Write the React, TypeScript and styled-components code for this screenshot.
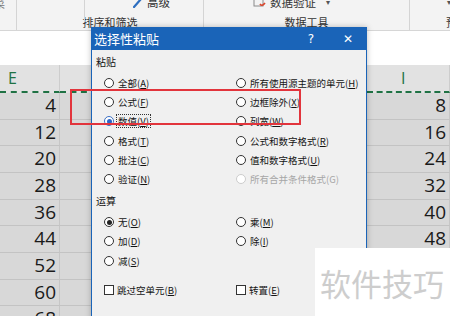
import React from 'react';
import styled, {createGlobalStyle} from 'styled-components';

const GlobalStyle = createGlobalStyle`
  html, body {
    margin: 0;
    padding: 0;
  }
  body {
    width: 450px;
    height: 316px;
    overflow: hidden;
    background: #fff;
    font-family: "Noto Sans CJK SC", "Noto Sans", sans-serif;
  }
`

type Opt = {label: string, key: string, checked?: 'blue' | 'dark', focus?: boolean, disabled?: boolean}

const pasteOptions: Opt[] = [
    {label: '全部', key: 'A'}, {label: '所有使用源主题的单元', key: 'H'},
    {label: '公式', key: 'F'}, {label: '边框除外', key: 'X'},
    {label: '数值', key: 'V', checked: 'blue', focus: true}, {label: '列宽', key: 'W'},
    {label: '格式', key: 'T'}, {label: '公式和数字格式', key: 'R'},
    {label: '批注', key: 'C'}, {label: '值和数字格式', key: 'U'},
    {label: '验证', key: 'N'}, {label: '所有合并条件格式', key: 'G', disabled: true},
]

const operationOptions: Opt[] = [
    {label: '无', key: 'O', checked: 'dark'}, {label: '乘', key: 'M'},
    {label: '加', key: 'D'}, {label: '除', key: 'I'},
    {label: '减', key: 'S'},
]

// visible rows: how many values show before the watermark / dialog covers them
const columns = [
    {name: 'E', width: 60, start: 4, rows: 9},
    {name: 'F', width: 100},
    {name: 'G', width: 100},
    {name: 'H', width: 107},
    {name: 'I', width: 83, start: 8, rows: 6},
]

const rowCount = 9

export default function App() {
    return (
        <Screen>
            <GlobalStyle/>
            <Ribbon>
                <Group $w={17}>
                    <TopRow><Faded>菜</Faded></TopRow>
                </Group>
                <Group $w={187}>
                    <TopRow>
                        <InnerSep $left={67}/>
                        <ToolItem $left={116}>
                            <svg width="11" height="10" viewBox="0 0 11 10">
                                <path d="M1 9 L8 1" stroke="#2e6fc0" strokeWidth="2.2" strokeLinecap="round"/>
                                <path d="M8 1 L10 -1" stroke="#555" strokeWidth="2"/>
                            </svg>
                            <span>高级</span>
                        </ToolItem>
                    </TopRow>
                    <GroupLabel>排序和筛选</GroupLabel>
                </Group>
                <Group $w={206}>
                    <TopRow>
                        <ToolItem $left={49}>
                            <svg width="14" height="10" viewBox="0 0 14 10">
                                <rect x="1" y="1" width="9" height="7" fill="none" stroke="#8a8a8a"/>
                                <path d="M7 6 q2 3 5 -1" stroke="#d9452b" strokeWidth="1.6" fill="none"/>
                            </svg>
                            <span>数据验证</span>
                            <Caret>▾</Caret>
                        </ToolItem>
                    </TopRow>
                    <GroupLabel>数据工具</GroupLabel>
                </Group>
                <Group $w={40} $last>
                    <TopRow><ToolItem $left={30}><Caret>▾</Caret></ToolItem></TopRow>
                    <GroupLabel $left={36}>预测</GroupLabel>
                </Group>
            </Ribbon>
            <FormulaBand/>
            <Sheet>
                {columns.map(c => (
                    <HeaderCell key={c.name} $w={c.width}>{c.name}</HeaderCell>
                ))}
                {Array.from({length: rowCount}).map((_, r) =>
                    columns.map(c => (
                        <Cell key={c.name + r}>
                            {c.start !== undefined && r < (c.rows ?? 0) ? c.start + r * 8 : ''}
                        </Cell>
                    ))
                )}
            </Sheet>

            <Dialog>
                <TitleBar>
                    <Title>选择性粘贴</Title>
                    <TitleButton $w={36}>?</TitleButton>
                    <TitleButton $w={38}>✕</TitleButton>
                </TitleBar>
                <Body>
                    <SectionLabel>粘贴</SectionLabel>
                    <OptionsGrid>
                        {pasteOptions.map(o => <Option key={o.key} opt={o}/>)}
                    </OptionsGrid>
                    <SectionLabel $gap={4}>运算</SectionLabel>
                    <OptionsGrid $gap={4}>
                        {operationOptions.map(o => <Option key={o.key} opt={o}/>)}
                    </OptionsGrid>
                    <OptionsGrid $gap={10}>
                        <OptionRow><Box/><span>跳过空单元(<u>B</u>)</span></OptionRow>
                        <OptionRow><Box/><span>转置(<u>E</u>)</span></OptionRow>
                    </OptionsGrid>
                </Body>
            </Dialog>

            <Highlight/>
            <Watermark>软件技巧</Watermark>
        </Screen>
    );
}

const Option = ({opt}: {opt: Opt}) => (
    <OptionRow $disabled={opt.disabled}>
        <Radio $checked={opt.checked} $disabled={opt.disabled}/>
        <OptionText $focus={opt.focus}>
            {opt.label}({opt.disabled ? opt.key : <u>{opt.key}</u>})
        </OptionText>
    </OptionRow>
)

const Screen = styled.div`
  position: relative;
  width: 450px;
  height: 316px;
  overflow: hidden;
  display: flex;
  flex-direction: column;
`

const Ribbon = styled.div`
  height: 30px;
  flex: none;
  display: flex;
  background: #f3f3f3;
  border-bottom: 1px solid #d6d6d6;
  color: #333;
  font-size: 11px;
`

const Group = styled.div<{$w: number, $last?: boolean}>`
  width: ${p => p.$w}px;
  flex: none;
  box-sizing: border-box;
  border-right: ${p => p.$last ? 'none' : '1px solid #d4d4d4'};
  display: flex;
  flex-direction: column;
  overflow: hidden;
`

const TopRow = styled.div`
  position: relative;
  height: 16px;
  margin-top: -5px;
  display: flex;
  align-items: flex-start;
`

const InnerSep = styled.div<{$left: number}>`
  position: absolute;
  left: ${p => p.$left}px;
  top: 0;
  width: 1px;
  height: 27px;
  background: #d4d4d4;
`

const ToolItem = styled.div<{$left: number}>`
  display: flex;
  align-items: center;
  gap: 3px;
  margin-left: ${p => p.$left}px;
  font-size: 11.5px;
  line-height: 14px;
  white-space: nowrap;

  svg {
    margin-top: 2px;
  }
`

const Caret = styled.span`
  margin-left: 7px;
  font-size: 8px;
  color: #555;
`

const Faded = styled.span`
  margin-left: -6px;
  color: #777;
`

const GroupLabel = styled.div<{$left?: number}>`
  margin-top: auto;
  padding-bottom: 1px;
  line-height: 14px;
  white-space: nowrap;
  text-align: ${p => p.$left !== undefined ? 'left' : 'center'};
  padding-left: ${p => p.$left ?? 0}px;
`

const FormulaBand = styled.div`
  height: 34px;
  flex: none;
  background: #fff;
`

const Sheet = styled.div`
  flex: none;
  display: grid;
  grid-template-columns: ${columns.map(c => c.width + 'px').join(' ')};
  grid-template-rows: 28px;
  grid-auto-rows: 26.67px;
  font-family: "Open Sans", "Noto Sans", sans-serif;
`

const HeaderCell = styled.div<{$w: number}>`
  box-sizing: border-box;
  background: #e2e2e2;
  border-right: 1px solid #cdcdcd;
  border-bottom: 2px dashed #1f7244;
  color: #1f7244;
  font-size: 16px;
  line-height: 26px;
  padding-left: ${p => p.$w === 60 ? 8 : 34}px;
`

const Cell = styled.div`
  box-sizing: border-box;
  background: #d8d8d8;
  border-right: 1px solid #c6c6c6;
  border-bottom: 1px solid #c3c3c3;
  color: #1a1a1a;
  font-size: 19px;
  line-height: 25px;
  text-align: right;
  padding-right: 3px;
`

const Dialog = styled.div`
  position: absolute;
  left: 91px;
  top: 27px;
  width: 276px;
  height: 300px;
  box-sizing: border-box;
  background: #f0f0f0;
  border: 1px solid #1a64b8;
  border-top: none;
  box-shadow: 0 0 6px rgba(0, 0, 0, 0.25);
  display: flex;
  flex-direction: column;
`

const TitleBar = styled.div`
  height: 23px;
  flex: none;
  margin: 0 -1px;
  background: #1a64b8;
  color: #fff;
  display: flex;
  align-items: center;
  padding-left: 3px;
`

const Title = styled.div`
  flex: 1;
  font-size: 13px;
`

const TitleButton = styled.div<{$w: number}>`
  width: ${p => p.$w}px;
  text-align: center;
  font-family: "DejaVu Sans", sans-serif;
  font-size: 12px;
`

const Body = styled.div`
  padding: 4px 0 0 4px;
  color: #141414;
  font-size: 9.5px;
`

const SectionLabel = styled.div<{$gap?: number}>`
  height: 16px;
  line-height: 16px;
  font-size: 10px;
  margin-top: ${p => p.$gap ?? 0}px;
`

const OptionsGrid = styled.div<{$gap?: number}>`
  display: grid;
  grid-template-columns: 132px 1fr;
  grid-auto-rows: 19.2px;
  padding-left: 8px;
  margin-top: ${p => p.$gap ?? 3.5}px;
`

const OptionRow = styled.div<{$disabled?: boolean}>`
  display: flex;
  align-items: center;
  gap: 3px;
  white-space: nowrap;
  color: ${p => p.$disabled ? '#a6a6a6' : 'inherit'};
`

const OptionText = styled.span<{$focus?: boolean}>`
  padding: 0 1px;
  line-height: 12px;
  outline: ${p => p.$focus ? '1px dotted #333' : 'none'};
`

const Radio = styled.span<{$checked?: 'blue' | 'dark', $disabled?: boolean}>`
  position: relative;
  width: 10px;
  height: 10px;
  flex: none;
  box-sizing: border-box;
  border-radius: 50%;
  background: #fff;
  border: 1px solid ${p => p.$disabled ? '#cccccc' : p.$checked === 'blue' ? '#3a6fc4' : '#333'};

  &::after {
    content: "";
    display: ${p => p.$checked ? 'block' : 'none'};
    position: absolute;
    left: 1.5px;
    top: 1.5px;
    width: 5px;
    height: 5px;
    border-radius: 50%;
    background: ${p => p.$checked === 'blue' ? '#2a66c8' : '#222'};
  }
`

const Box = styled.span`
  width: 10px;
  height: 10px;
  flex: none;
  box-sizing: border-box;
  background: #fff;
  border: 1px solid #333;
`

const Highlight = styled.div`
  position: absolute;
  left: 70px;
  top: 88.5px;
  width: 231px;
  height: 36px;
  box-sizing: border-box;
  border: 2px solid #e2343c;
  pointer-events: none;
`

const Watermark = styled.div`
  position: absolute;
  left: 315px;
  top: 248px;
  width: 135px;
  height: 68px;
  box-sizing: border-box;
  padding-left: 5px;
  background: #fff;
  display: flex;
  align-items: center;
  color: #cdcdcd;
  font-size: 31px;
  white-space: nowrap;
`
